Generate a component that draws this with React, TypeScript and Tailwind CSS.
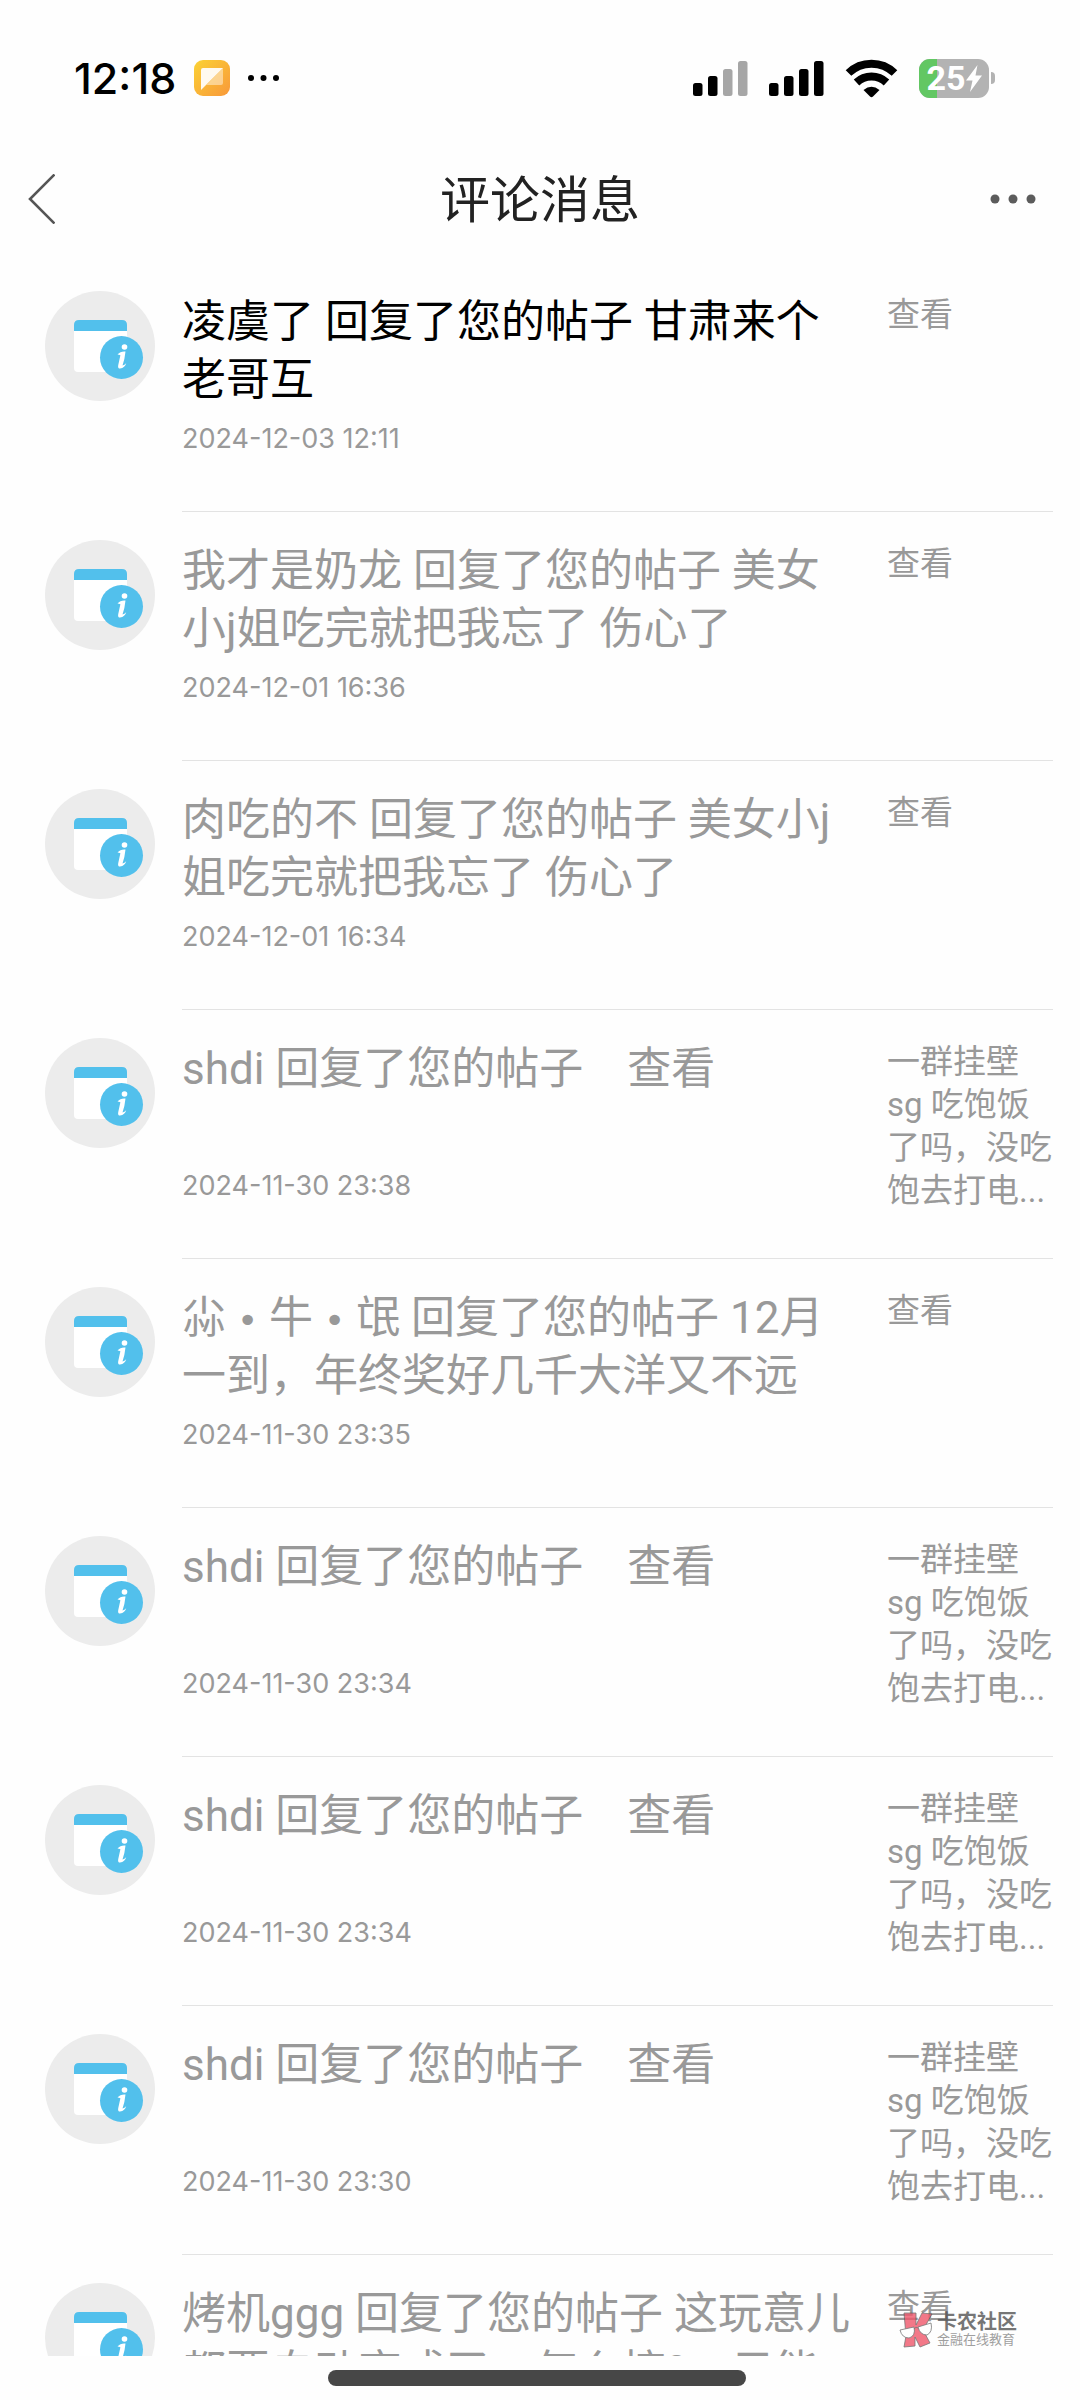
import clsx from "clsx";

type Message = {
  title: string;
  time: string;
  side: string;
  unread?: boolean;
};

const LONG_REPLY = "一群挂壁 sg 吃饱饭了吗，没吃饱去打电...";

const messages: Message[] = [
  { title: "凌虞了 回复了您的帖子 甘肃来个老哥互", time: "2024-12-03 12:11", side: "查看", unread: true },
  { title: "我才是奶龙 回复了您的帖子 美女小j姐吃完就把我忘了 伤心了", time: "2024-12-01 16:36", side: "查看" },
  { title: "肉吃的不 回复了您的帖子 美女小j姐吃完就把我忘了 伤心了", time: "2024-12-01 16:34", side: "查看" },
  { title: "shdi 回复了您的帖子\u3000查看", time: "2024-11-30 23:38", side: LONG_REPLY },
  { title: "尛 • 牛 • 氓 回复了您的帖子 12月一到，年终奖好几千大洋又不远", time: "2024-11-30 23:35", side: "查看" },
  { title: "shdi 回复了您的帖子\u3000查看", time: "2024-11-30 23:34", side: LONG_REPLY },
  { title: "shdi 回复了您的帖子\u3000查看", time: "2024-11-30 23:34", side: LONG_REPLY },
  { title: "shdi 回复了您的帖子\u3000查看", time: "2024-11-30 23:30", side: LONG_REPLY },
  { title: "烤机ggg 回复了您的帖子 这玩意儿都要自动变成了，怎么搞?，只能", time: "2024-11-30 23:28", side: "查看" },
];

function Signal({ level }: { level: number }) {
  const heights = [13, 20, 27, 35];
  return (
    <svg width="55" height="36" viewBox="0 0 55 36" aria-hidden="true">
      {heights.map((h, i) => (
        <rect key={h} x={i * 15} y={36 - h} width="9.5" height={h} rx="2.5" fill={i < level ? "#000" : "#a6a6a6"} />
      ))}
    </svg>
  );
}

function Wifi() {
  return (
    <svg width="53" height="40" viewBox="0 0 53 40" fill="none" stroke="#000" aria-hidden="true">
      <path d="M3.5 15 A33 33 0 0 1 49.5 15" strokeWidth="8" />
      <path d="M11.5 24.5 A22 22 0 0 1 41.5 24.5" strokeWidth="8" />
      <path d="M18.5 32 Q26.5 25.5 34.5 32 L28 38.6 Q26.5 40 25 38.6 Z" fill="#000" stroke="none" />
    </svg>
  );
}

function Battery() {
  return (
    <div className="flex items-center gap-0.5">
      <div className="relative flex h-[39px] w-[70px] items-center justify-center overflow-hidden rounded-[11px] bg-[#b3b3b3]">
        <div className="absolute inset-y-0 left-0 w-1/4 bg-[#62c763]" />
        <span className="relative text-[34px] leading-none font-bold text-white">25</span>
        <svg className="relative" width="16" height="27" viewBox="0 0 16 27" fill="#fff" aria-hidden="true">
          <path d="M11.5 0 L0 15.5 H6.5 L4 27 L16 10.5 H9.5 Z" />
        </svg>
      </div>
      <div className="h-3 w-1 rounded-r-full bg-[#b3b3b3]" />
    </div>
  );
}

function StatusBar() {
  return (
    <div className="flex h-[136px] items-center justify-between pt-5 pr-[85px] pl-[74px]">
      <div className="flex items-center">
        <span className="font-['Inter'] text-[43px] leading-none font-medium text-black">12:18</span>
        <svg className="ml-[18px]" width="36" height="36" viewBox="0 0 36 36" aria-hidden="true">
          <defs>
            <linearGradient id="note" x1="0" y1="0" x2="1" y2="1">
              <stop offset="0" stopColor="#fbd234" />
              <stop offset="1" stopColor="#f8983a" />
            </linearGradient>
          </defs>
          <rect width="36" height="36" rx="9" fill="url(#note)" />
          <path d="M9 8 H27 Q29 8 29 10 V23 Q29 25 27 25 H12.5 L29 8 Z" fill="#fff" opacity="0.45" />
          <path d="M9 8 H29 L7 30 V10 Q7 8 9 8 Z" fill="#fff" opacity="0.92" />
        </svg>
        <svg className="ml-[18px]" width="31" height="6" viewBox="0 0 31 6" aria-hidden="true">
          <circle cx="3" cy="3" r="3" />
          <circle cx="15.5" cy="3" r="3" />
          <circle cx="28" cy="3" r="3" />
        </svg>
      </div>
      <div className="flex items-center gap-[21px]">
        <Signal level={2} />
        <Signal level={4} />
        <Wifi />
        <Battery />
      </div>
    </div>
  );
}

function NavBar() {
  return (
    <header className="grid h-[126px] grid-cols-[1fr_auto_1fr] items-center px-7">
      <button type="button" aria-label="返回" className="justify-self-start">
        <svg width="27" height="50" viewBox="0 0 27 50" fill="none" stroke="#555" strokeWidth="2.6" aria-hidden="true">
          <path d="M26.5 0.5 L2 25 L26.5 49.5" />
        </svg>
      </button>
      <h1 className="pt-1 text-[50px] leading-none text-[#222]">评论消息</h1>
      <button type="button" aria-label="更多" className="justify-self-end pr-4">
        <svg width="46" height="10" viewBox="0 0 46 10" fill="#5c5c5c" aria-hidden="true">
          <circle cx="5" cy="5" r="4.5" />
          <circle cx="23" cy="5" r="4.5" />
          <circle cx="41" cy="5" r="4.5" />
        </svg>
      </button>
    </header>
  );
}

function Avatar() {
  return (
    <svg className="mt-[29px] shrink-0" width="110" height="110" viewBox="0 0 110 110" aria-hidden="true">
      <circle cx="55" cy="55" r="55" fill="#ececec" />
      <path d="M29 40 H82 V77 Q82 81 78 81 H33 Q29 81 29 77 Z" fill="#fff" />
      <path d="M29 40 V34 Q29 29 34 29 H77 Q82 29 82 34 V40 Z" fill="#52c0ec" />
      <circle cx="76.5" cy="66.5" r="21.5" fill="#52c0ec" />
      <circle cx="79.5" cy="56" r="2.8" fill="#fff" />
      <path
        d="M72.5 63.5 Q75.5 60 80.5 60.5 Q79.8 68 77.5 74.6 Q79.5 74.2 81.2 72.2 Q80 76.5 75 77.6 Q72.6 77.6 73.2 74.2 L75.4 64.2 Q74 63.6 72.5 63.5 Z"
        fill="#fff"
      />
    </svg>
  );
}

// bullets inside nicknames are drawn heavier than the text font has them
function Title({ text }: { text: string }) {
  return text.split("•").map((part, i) => (
    <span key={i}>
      {i > 0 && <span className="font-['DejaVu_Sans'] text-[36px] leading-none">•</span>}
      {part}
    </span>
  ));
}

function MessageRow({ message, first }: { message: Message; first: boolean }) {
  return (
    <li className="flex gap-[27px] pr-[27px] pl-[45px]">
      <Avatar />
      <div className={clsx("flex min-w-0 flex-1 justify-between border-t pt-[30px] pb-[54px]", first ? "border-transparent" : "border-[#e3e3e3]")}>
        <div className="w-[678px]">
          <p className={clsx("line-clamp-2 min-h-[116px] text-[44px] leading-[58px]", message.unread ? "text-black" : "text-[#999]")}>
            <Title text={message.title} />
          </p>
          <time className="mt-3 block font-['Inter'] text-[27px] leading-9 text-[#999]">{message.time}</time>
        </div>
        {/* side text may run past the date, so it does not stretch the row */}
        <a href="#" className="-mb-6 w-[166px] text-[33px] leading-[43px] text-[#999]">
          {message.side}
        </a>
      </div>
    </li>
  );
}

function Watermark() {
  return (
    <div className="absolute right-[63px] bottom-2 flex items-center gap-1 opacity-80">
      <svg width="34" height="36" viewBox="0 0 34 36" stroke="#555" strokeWidth="0.8" aria-hidden="true">
        <path d="M5 1 H17 V13 L23 1 L33 2 L24 18 L31 31 L21 35 L16 25 V34 L5 35 L7 24 Z" fill="#f0576b" />
        <path d="M1 18 L15 15 Q17 24 10 26 Q3 26 1 18 Z" fill="#fff" />
        <path d="M19 15 L32 11 Q34 20 28 23 Q21 23 19 15 Z" fill="#fff" />
        <path d="M15 17 Q17 14 19 16" fill="none" />
      </svg>
      <div className="text-[#555]">
        <div className="text-[20px] leading-5 font-bold">卡农社区</div>
        <div className="text-[13px] leading-4 text-[#888]">金融在线教育</div>
      </div>
    </div>
  );
}

export default function App() {
  return (
    <div className="flex h-screen flex-col bg-[#fefefe] font-['Roboto','Noto_Sans_CJK_SC',sans-serif]">
      <StatusBar />
      <NavBar />
      <main className="relative min-h-0 flex-1 overflow-hidden">
        <ul>
          {messages.map((message, i) => (
            <MessageRow key={i} message={message} first={i === 0} />
          ))}
        </ul>
        <Watermark />
      </main>
      <div className="flex h-11 shrink-0 items-start justify-center pt-3.5 pr-1.5">
        <div className="h-4 w-[418px] rounded-full bg-[#474747]" />
      </div>
    </div>
  );
}
